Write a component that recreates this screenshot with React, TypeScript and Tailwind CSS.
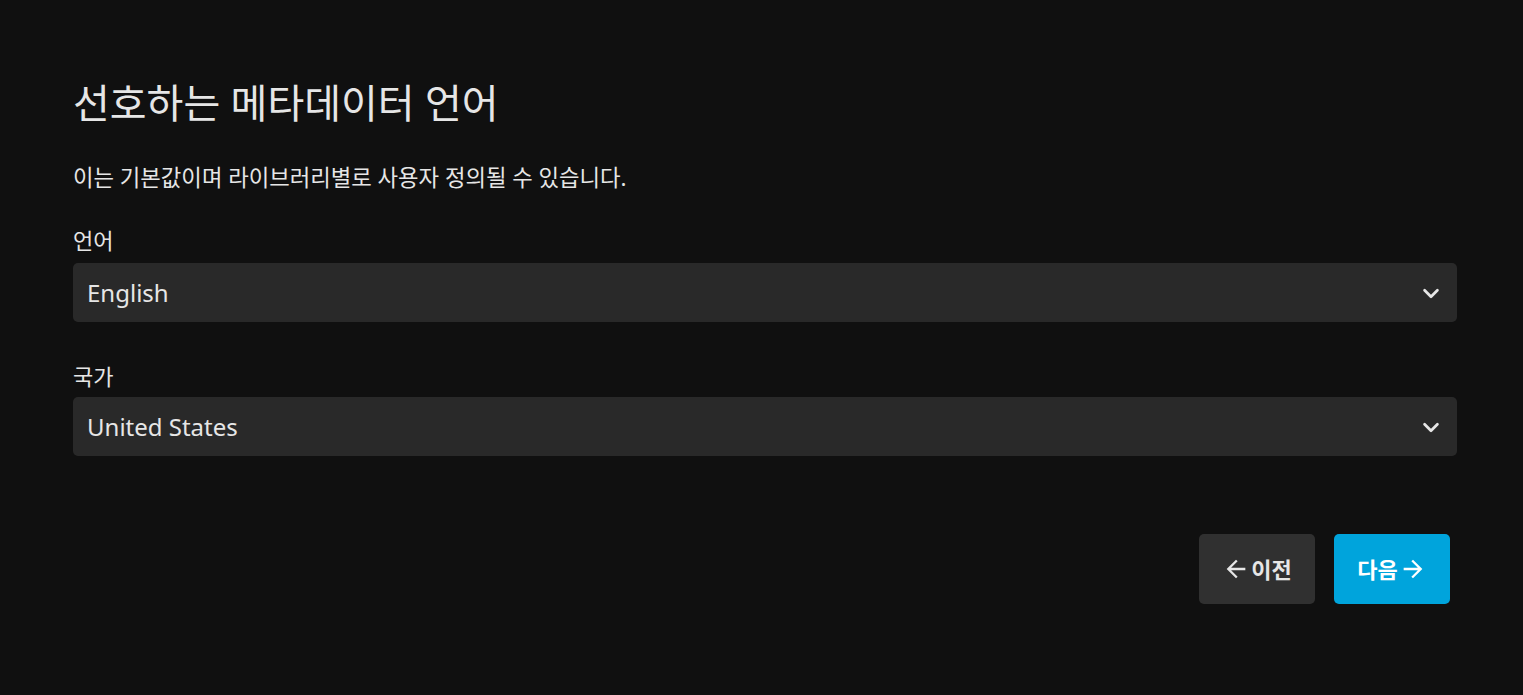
import React from "react";

const font = { fontFamily: '"Noto Sans", "Noto Sans CJK KR", sans-serif' };

function Chevron() {
  return (
    <svg width="22" height="22" viewBox="0 0 24 24" fill="none" stroke="#e6e6e6" strokeWidth="3" strokeLinecap="round" strokeLinejoin="round">
      <path d="M5 9l7 7 7-7" />
    </svg>
  );
}

function Select({ value }: { value: string }) {
  return (
    <div className="flex h-[59px] w-full items-center justify-between rounded-[5px] bg-[#292929] pl-[14px] pr-[15px]">
      <span className="text-[24px] text-[#e6e6e6]">{value}</span>
      <Chevron />
    </div>
  );
}

export default function App() {
  return (
    <div className="min-h-[695px] w-full bg-[#101010] text-[#e6e6e6]" style={font}>
      <div className="pl-[73px] pr-[66px] pt-[73px]">
        <h1 className="text-[40px] font-normal leading-[60px]">선호하는 메타데이터 언어</h1>
        <p className="mt-[30px] text-[22.3px] leading-[30px]">이는 기본값이며 라이브러리별로 사용자 정의될 수 있습니다.</p>
        <div className="mt-[32px]">
          <div className="mb-[8px] text-[22px] leading-[30px]">언어</div>
          <Select value="English" />
        </div>
        <div className="mt-[39px]">
          <div className="mb-[6px] text-[22px] leading-[30px]">국가</div>
          <Select value="United States" />
        </div>
        <div className="mt-[78px] flex justify-end gap-[19px] pr-[7px]">
          <button className="flex h-[70px] w-[116px] items-center justify-center gap-[1px] rounded-[5px] bg-[#303030] text-[22px] font-bold text-[#e6e6e6]">
            <svg width="28" height="28" viewBox="0 0 24 24" fill="currentColor">
              <path d="M20 11H7.83l5.59-5.59L12 4l-8 8 8 8 1.41-1.41L7.83 13H20v-2z" />
            </svg>
            이전
          </button>
          <button className="flex h-[70px] w-[116px] items-center justify-center gap-[1px] rounded-[5px] bg-[#00a4dc] text-[22px] font-bold text-white">
            다음
            <svg width="28" height="28" viewBox="0 0 24 24" fill="currentColor">
              <path d="M12 4l-1.41 1.41L16.17 11H4v2h12.17l-5.58 5.59L12 20l8-8z" />
            </svg>
          </button>
        </div>
      </div>
    </div>
  );
}
